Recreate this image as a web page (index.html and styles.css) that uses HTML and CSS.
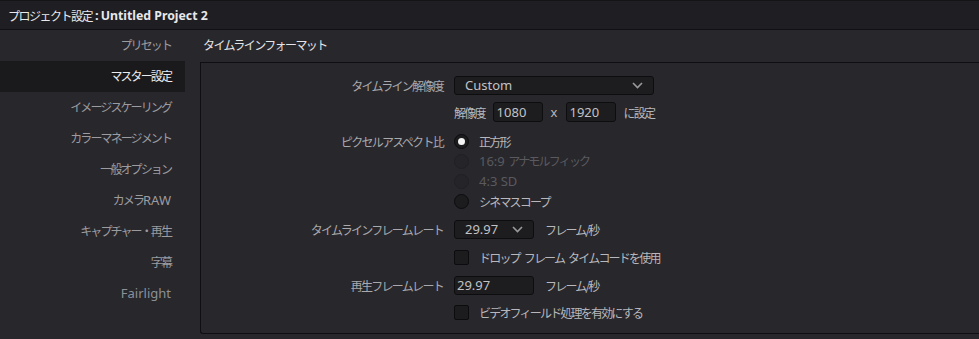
FILE: index.html
```html
<!DOCTYPE html>
<html lang="ja">
<head>
  <meta charset="utf-8">
  <title>プロジェクト設定</title>
  <link rel="stylesheet" href="styles.css">
</head>
<body>
  <div class="titlebar">
    <span class="title-jp">プロジェクト設定</span><span class="title-colon">:</span><span class="title-name">Untitled Project 2</span>
  </div>

  <div class="main">
    <ul class="sidebar">
      <li>プリセット</li>
      <li class="active">マスター設定</li>
      <li>イメージスケーリング</li>
      <li>カラーマネージメント</li>
      <li>一般オプション</li>
      <li>カメラ<span class="latin">RAW</span></li>
      <li>キャプチャー・再生</li>
      <li>字幕</li>
      <li class="fairlight"><span class="latin">Fairlight</span></li>
    </ul>

    <div class="content">
      <div class="section-title">タイムラインフォーマット</div>

      <div class="panel">
        <div class="row r-res">
          <div class="label">タイムライン解像度</div>
          <div class="control">
            <div class="select wide">
              <span class="latin">Custom</span>
              <svg class="chev" width="11" height="7" viewBox="0 0 11 7"><path d="M1 1 L5.5 5.5 L10 1" fill="none" stroke="#9a9a9e" stroke-width="1.6"/></svg>
            </div>
          </div>
        </div>

        <div class="row r-size">
          <div class="label"></div>
          <div class="control">
            <span class="text">解像度</span>
            <input class="field num" type="text" value="1080">
            <span class="text x"><span class="latin">x</span></span>
            <input class="field num" type="text" value="1920">
            <span class="text">に設定</span>
          </div>
        </div>

        <div class="row r-aspect">
          <div class="label">ピクセルアスペクト比</div>
          <div class="control">
            <span class="radio checked"></span><span class="text">正方形</span>
          </div>
        </div>
        <div class="row r-radio">
          <div class="label"></div>
          <div class="control dim">
            <span class="radio"></span><span class="text"><span class="latin">16:9 </span>アナモルフィック</span>
          </div>
        </div>
        <div class="row r-radio">
          <div class="label"></div>
          <div class="control dim">
            <span class="radio"></span><span class="text"><span class="latin">4:3 SD</span></span>
          </div>
        </div>
        <div class="row r-radio">
          <div class="label"></div>
          <div class="control">
            <span class="radio"></span><span class="text">シネマスコープ</span>
          </div>
        </div>

        <div class="row r-fps">
          <div class="label">タイムラインフレームレート</div>
          <div class="control">
            <div class="select short">
              <span class="latin">29.97</span>
              <svg class="chev" width="11" height="7" viewBox="0 0 11 7"><path d="M1 1 L5.5 5.5 L10 1" fill="none" stroke="#9a9a9e" stroke-width="1.6"/></svg>
            </div>
            <span class="text unit">フレーム/秒</span>
          </div>
        </div>

        <div class="row r-check">
          <div class="label"></div>
          <div class="control">
            <span class="check"></span><span class="text">ドロップ フレーム タイムコードを使用</span>
          </div>
        </div>

        <div class="row r-play">
          <div class="label">再生フレームレート</div>
          <div class="control">
            <input class="field rate" type="text" value="29.97">
            <span class="text unit">フレーム/秒</span>
          </div>
        </div>

        <div class="row r-check2">
          <div class="label"></div>
          <div class="control">
            <span class="check"></span><span class="text">ビデオフィールド処理を有効にする</span>
          </div>
        </div>
      </div>
    </div>
  </div>
</body>
</html>
```

FILE: styles.css
```css
html, body {
  margin: 0;
  padding: 0;
}

body {
  width: 979px;
  height: 339px;
  overflow: hidden;
  background-color: #28272c;
  font-family: "Noto Sans CJK JP", "Noto Sans", sans-serif;
  font-size: 12px;
  color: #b4b4b8;
}

.titlebar {
  height: 28px;
  border-top: 1px solid #141416;
  border-bottom: 1px solid #111113;
  background-color: #1f1e23;
  display: flex;
  align-items: center;
  padding-left: 8px;
  color: #e8e8ea;
  font-size: 12px;
}

.title-jp {
  letter-spacing: -1.5px;
}

.title-colon {
  font-family: "Noto Sans", sans-serif;
  font-weight: bold;
  font-size: 13px;
  margin: 0 2px 0 3px;
}

.title-name {
  font-family: "Noto Sans", sans-serif;
  font-weight: bold;
  font-size: 12.3px;
}

.main {
  display: flex;
}

/* left menu */
.sidebar {
  list-style: none;
  margin: 0;
  padding: 0;
  width: 185px;
  flex: none;
}

.sidebar li {
  height: 31px;
  line-height: 30px;
  text-align: right;
  padding-right: 14px;
  color: #9c9ca0;
  letter-spacing: -1.9px;
}

.sidebar li.active {
  background-color: #1a1a1c;
  color: #ececee;
}

.sidebar li.fairlight {
  color: #8b9097;
}

/* right side */
.content {
  flex: 1;
}

.section-title {
  height: 32px;
  line-height: 30px;
  padding-left: 18px;
  color: #e4e4e6;
  letter-spacing: -1.6px;
}

.panel {
  margin-left: 15px;
  height: 272px;
  border: 1px solid #0f0f11;
  border-right: none;
  border-radius: 0 0 0 3px;
  padding-top: 13px;
  box-sizing: border-box;
}

.row {
  display: grid;
  grid-template-columns: 242px auto;
  column-gap: 11px;
  align-items: center;
  height: 20px;
}

.label {
  text-align: right;
  color: #a9a9ad;
  letter-spacing: -1.7px;
}

.control {
  display: flex;
  align-items: center;
}

.text {
  letter-spacing: -1.8px;
  word-spacing: 3px;
  color: #b8b8bc;
}

.dim .text {
  color: #5a5a5e;
}

.latin {
  font-family: "Noto Sans", sans-serif;
  font-size: 13px;
  letter-spacing: 0;
  word-spacing: 0;
}

.r-res { margin-top: -1px; }
.r-size { margin-top: 7px; }
.r-aspect { margin-top: 9px; }
.r-fps { margin-top: 8px; }
.r-check { margin-top: 8px; }
.r-play { margin-top: 8px; }
.r-check2 { margin-top: 7px; }

.select {
  height: 19px;
  box-sizing: border-box;
  border: 1px solid #0d0d0f;
  border-radius: 3px;
  background-color: #1d1d1f;
  display: flex;
  align-items: center;
  justify-content: space-between;
  padding: 0 10px 0 10px;
}

.select.wide { width: 200px; }
.select.short { width: 80px; }

.select .latin {
  color: #c2c2c6;
}

.chev {
  display: block;
}

.field {
  height: 20px;
  box-sizing: border-box;
  border: 1px solid #0d0d0f;
  border-radius: 3px;
  background-color: #1d1d1f;
  color: #c2c2c6;
  font-family: "Noto Sans", sans-serif;
  font-size: 13px;
  padding: 0 3px;
  margin: 0;
  outline: none;
}

.field.num {
  width: 50px;
  margin-left: 8px;
  margin-right: 8px;
}

.field.rate {
  width: 80px;
  height: 19px;
  padding: 0 2px;
}

.unit {
  margin-left: 11px;
}

.radio {
  width: 15px;
  height: 15px;
  box-sizing: border-box;
  border-radius: 50%;
  border: 1px solid #0c0c0e;
  background-color: #1c1c1e;
  margin-right: 10px;
  position: relative;
  flex: none;
}

.radio.checked::after {
  content: "";
  position: absolute;
  left: 3px;
  top: 3px;
  width: 7px;
  height: 7px;
  border-radius: 50%;
  background-color: #f4f4f4;
}

.dim .radio {
  background-color: #252428;
  border-color: #212024;
}

.check {
  width: 15px;
  height: 15px;
  box-sizing: border-box;
  border: 1px solid #0c0c0e;
  border-radius: 2px;
  background-color: #1c1c1e;
  margin-right: 10px;
  flex: none;
}
```
